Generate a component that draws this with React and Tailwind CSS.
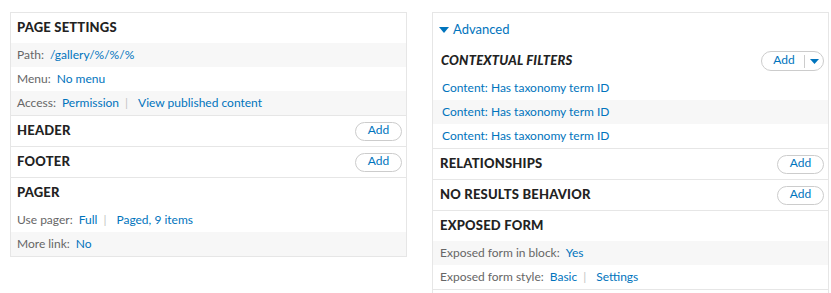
const body = "font-['Lato',sans-serif]";

const Link = ({ children }) => <span className="text-[#0074bd]">{children}</span>;
const Sep = () => <span className="ml-[6px] mr-[10px] text-[#c4c4c4]">|</span>;

const AddButton = () => (
  <button className="h-[19px] w-[47px] rounded-full border border-[#ccc] bg-white pb-[2px] text-[12px] leading-none text-[#0074bd]">
    Add
  </button>
);

const SplitAdd = () => (
  <div className="flex h-[20px] w-[63px] items-center rounded-full border border-[#ccc] bg-white">
    <span className="flex-1 pb-[2px] pl-[2px] text-center text-[12px] leading-none text-[#0074bd]">Add</span>
    <span className="h-[13px] w-px bg-[#ccc]" />
    <span className="flex w-[18px] justify-center">
      <svg width="9" height="5" viewBox="0 0 9 5"><path d="M0 0h9L4.5 5z" fill="#0074bd" /></svg>
    </span>
  </div>
);

const Header = ({ title, action, pl = "pl-[6px]" }) => (
  <div className={`flex h-[31px] items-center justify-between border-b border-[#e6e6e6] pr-[4px] ${pl}`}>
    <span className="text-[13px] font-black uppercase tracking-[0.2px] text-[#222]">{title}</span>
    {action}
  </div>
);

const Title = ({ children, pl = "pl-[6px]" }) => (
  <div className={`flex h-[30px] items-center ${pl}`}>
    <span className="text-[13px] font-black uppercase tracking-[0.2px] text-[#222]">{children}</span>
  </div>
);

const Row = ({ label, children, gray, pl = "pl-[6px]", border }) => (
  <div className={`flex items-center text-[12px] ${pl} ${gray ? "bg-[#f7f7f7]" : "bg-white"} ${border ? "h-[25px] border-b border-[#e6e6e6]" : "h-[24px]"}`}>
    {label && <span className="mr-[6px] text-[#666]">{label}</span>}
    {children}
  </div>
);

export default function App() {
  return (
    <div className={`flex min-h-[293px] gap-[25px] bg-white pl-[10px] pt-[12px] ${body}`}>
      <div className="w-[397px] self-start border border-[#e6e6e6]">
        <Title>Page Settings</Title>
        <Row label="Path:" gray><Link>/gallery/%/%/%</Link></Row>
        <Row label="Menu:"><Link>No menu</Link></Row>
        <Row label="Access:" gray border>
          <Link>Permission</Link><Sep /><Link>View published content</Link>
        </Row>
        <Header title="Header" action={<AddButton />} />
        <Header title="Footer" action={<AddButton />} />
        <Title>Pager</Title>
        <Row label="Use pager:">
          <Link>Full</Link><Sep /><Link>Paged, 9 items</Link>
        </Row>
        <Row label="More link:" gray><Link>No</Link></Row>
      </div>

      <div className="w-[397px] border-x border-t border-[#e6e6e6]">
        <div className="flex h-[33px] items-center pl-[6px] text-[13px] text-[#0074bd]">
          <svg width="10" height="6" viewBox="0 0 10 6" className="mr-[4px]"><path d="M0 0h10L5 6z" fill="#0074bd" /></svg>
          Advanced
        </div>
        <div className="flex h-[30px] items-center justify-between pl-[8px] pr-[4px]">
          <span className="text-[13px] font-black uppercase italic tracking-[0.2px] text-[#222]">Contextual Filters</span>
          <SplitAdd />
        </div>
        <Row pl="pl-[9px]"><Link>Content: Has taxonomy term ID</Link></Row>
        <Row pl="pl-[9px]" gray><Link>Content: Has taxonomy term ID</Link></Row>
        <Row pl="pl-[9px]" border><Link>Content: Has taxonomy term ID</Link></Row>
        <Header title="Relationships" pl="pl-[7px]" action={<AddButton />} />
        <Header title="No Results Behavior" pl="pl-[7px]" action={<AddButton />} />
        <Title pl="pl-[7px]">Exposed Form</Title>
        <Row label="Exposed form in block:" pl="pl-[7px]" gray><Link>Yes</Link></Row>
        <Row label="Exposed form style:" pl="pl-[7px]" border>
          <Link>Basic</Link><Sep /><Link>Settings</Link>
        </Row>
        <div className="h-[24px]" />
      </div>
    </div>
  );
}
